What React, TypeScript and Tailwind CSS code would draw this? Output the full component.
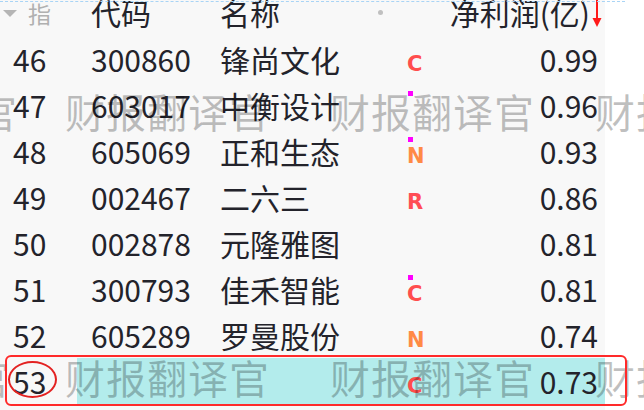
import React from "react";

type Row = {
  i: string;
  code: string;
  name: string;
  sq: boolean;
  mk: string;
  mc: string;
  v: string;
};

const rows: Row[] = [
  { i: "46", code: "300860", name: "锋尚文化", sq: false, mk: "C", mc: "text-[#ff4d4d]", v: "0.99" },
  { i: "47", code: "603017", name: "中衡设计", sq: true, mk: "", mc: "", v: "0.96" },
  { i: "48", code: "605069", name: "正和生态", sq: true, mk: "N", mc: "text-[#ff8a45]", v: "0.93" },
  { i: "49", code: "002467", name: "二六三", sq: false, mk: "R", mc: "text-[#ff4d55]", v: "0.86" },
  { i: "50", code: "002878", name: "元隆雅图", sq: false, mk: "", mc: "", v: "0.81" },
  { i: "51", code: "300793", name: "佳禾智能", sq: true, mk: "C", mc: "text-[#ff4d4d]", v: "0.81" },
  { i: "52", code: "605289", name: "罗曼股份", sq: false, mk: "N", mc: "text-[#ff8a45]", v: "0.74" },
];

const font = { fontFamily: '"Noto Sans CJK SC", "Noto Sans", sans-serif' };

function Mark({ sq, mk, mc }: { sq: boolean; mk: string; mc: string }) {
  return (
    <div className="relative h-full w-[20px]">
      {sq && <div className="absolute left-0 top-[9px] h-[5px] w-[5px] bg-[#ff00ff]" />}
      {mk && (
        <div
          className={`absolute left-[-1px] top-[18px] text-[21px] font-bold leading-none ${mc}`}
          style={{ fontFamily: '"DejaVu Sans", sans-serif' }}
        >
          {mk}
        </div>
      )}
    </div>
  );
}

function Watermark({ top, left, shift }: { top: number; left: number; shift: number }) {
  return (
    <div
      className="pointer-events-none absolute flex gap-[60px] whitespace-nowrap text-[40px] leading-none tracking-[1px] text-black/25"
      style={{ top, left }}
    >
      <span style={{ marginRight: shift }}>财报翻译官</span>
      <span>财报翻译官</span>
      <span>财报翻译官</span>
      <span>财报翻译官</span>
    </div>
  );
}

export default function App() {
  return (
    <div className="relative h-[410px] w-[644px] overflow-hidden bg-white text-[#23232b]" style={font}>
      <div className="h-full w-[605px] bg-[#f8f8f8]">
        {/* header */}
        <div className="flex h-[36px] items-start text-[30px] leading-[30px]">
          <div className="flex w-[77px] items-center pt-[2px]">
            <svg width="14" height="8" viewBox="0 0 14 8" className="ml-[3px] mt-[1px]">
              <polygon points="0,0 14,0 7,7" fill="#b5b5b5" />
            </svg>
            <span className="ml-[11px] text-[23px] leading-[23px] text-[#b0b0b0]">指</span>
          </div>
          <div className="mt-[-3px] w-[143px] pl-[14px]">代码</div>
          <div className="mt-[-3px] w-[155px]">名称</div>
          <div className="relative h-full w-[53px]">
            <div className="absolute left-[3px] top-[10px] h-[5px] w-[5px] rounded-full bg-[#c0c0c0]" />
          </div>
          <div className="mt-[-3px] flex flex-1 items-start justify-end pr-[2px]">
            <span>净利润(亿)</span>
            <svg width="12" height="30" viewBox="0 0 12 30" className="ml-[1px] mt-[3px]">
              <rect x="5" y="0" width="2" height="22" fill="#ff1a1a" />
              <polygon points="1.5,18 10.5,18 6,27" fill="#ff1a1a" />
            </svg>
          </div>
        </div>
        {/* rows */}
        {rows.map((r) => (
          <div key={r.i} className="flex h-[46px] items-center text-[30px] leading-none">
            <div className="w-[77px] pl-[13px]">{r.i}</div>
            <div className="w-[143px] pl-[14px]">{r.code}</div>
            <div className="w-[188px]">{r.name}</div>
            <Mark sq={r.sq} mk={r.mk} mc={r.mc} />
            <div className="flex-1 pr-[7px] text-right">{r.v}</div>
          </div>
        ))}
        <div className="flex h-[46px] items-center text-[30px] leading-none">
          <div className="w-[77px] pl-[13px]">53</div>
          <div className="flex h-full flex-1 items-center bg-[#b3ecec]">
            <div className="w-[331px]" />
            <Mark sq={false} mk="C" mc="text-[#ff4d4d]" />
            <div className="flex-1 pr-[7px] text-right">0.73</div>
          </div>
        </div>
      </div>

      {/* dotted top line */}
      <div className="pointer-events-none absolute left-0 top-[1px] w-[625px] border-t border-dashed border-[#a9d4f5]" />

      <Watermark top={91} left={-187} shift={-13} />
      <Watermark top={357} left={-194} shift={-6} />

      {/* selection outline */}
      <div className="pointer-events-none absolute left-[5px] top-[355px] h-[51px] w-[622px] rounded-[6px] border-2 border-[#ff2a2a]" />
      <div className="pointer-events-none absolute left-[8px] top-[361px] h-[37px] w-[49px] rounded-[50%] border-2 border-[#e32222]" />
    </div>
  );
}
